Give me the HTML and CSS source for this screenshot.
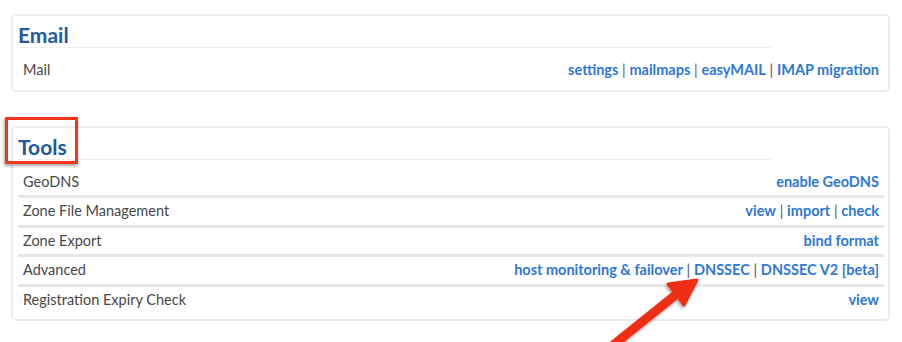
FILE: index.html
```html
<!DOCTYPE html>
<html>
<head>
<meta charset="utf-8">
<link rel="stylesheet" href="styles.css">
</head>
<body>
<div class="page">
  <section class="card">
    <h2 class="card-title">Email</h2>
    <div class="rows">
      <div class="row last">
        <span class="label">Mail</span>
        <span class="links"><a href="#">settings</a> <span class="sep">|</span> <a href="#">mailmaps</a> <span class="sep">|</span> <a href="#">easyMAIL</a> <span class="sep">|</span> <a href="#">IMAP migration</a></span>
      </div>
    </div>
  </section>

  <section class="card tools">
    <h2 class="card-title"><span class="highlight">Tools</span></h2>
    <div class="rows">
      <div class="row">
        <span class="label">GeoDNS</span>
        <span class="links"><a href="#">enable GeoDNS</a></span>
      </div>
      <div class="row">
        <span class="label">Zone File Management</span>
        <span class="links"><a href="#">view</a> <span class="sep">|</span> <a href="#">import</a> <span class="sep">|</span> <a href="#">check</a></span>
      </div>
      <div class="row">
        <span class="label">Zone Export</span>
        <span class="links"><a href="#">bind format</a></span>
      </div>
      <div class="row">
        <span class="label">Advanced</span>
        <span class="links"><a href="#">host monitoring &amp; failover</a> <span class="sep">|</span> <a href="#">DNSSEC</a> <span class="sep">|</span> <a href="#">DNSSEC V2 [beta]</a></span>
      </div>
      <div class="row last">
        <span class="label">Registration Expiry Check</span>
        <span class="links"><a href="#">view</a></span>
      </div>
    </div>
  </section>
</div>
<svg class="arrow" width="902" height="342" viewBox="0 0 902 342">
  <defs>
    <filter id="sh" x="-20%" y="-20%" width="140%" height="140%">
      <feDropShadow dx="-1" dy="2" stdDeviation="1.5" flood-color="#000" flood-opacity="0.35"/>
    </filter>
  </defs>
  <g filter="url(#sh)">
    <line x1="612" y1="346" x2="678" y2="293" stroke="#ef2f14" stroke-width="9" stroke-linecap="round"/>
    <polygon points="697,280 668,284 684,305" fill="#ef2f14" stroke="#ef2f14" stroke-width="3" stroke-linejoin="round"/>
  </g>
</svg>
</body>
</html>
```
FILE: styles.css
```css
html, body {
  margin: 0;
  padding: 0;
  background: #fff;
}
body {
  font-family: Lato, "Noto Sans", sans-serif;
  width: 902px;
  height: 342px;
  overflow: hidden;
  position: relative;
}
.page {
  padding: 14px 12px 0 11px;
}
.card {
  border: 2px solid #e8ecf2;
  border-radius: 5px;
  padding: 7px 4px 6px 5px;
  background: #fff;
}
.card.tools {
  margin-top: 34px;
  padding-bottom: 6px;
}
.card-title {
  margin: 0;
  width: 753px;
  font-size: 21px;
  line-height: 24px;
  font-weight: 700;
  color: #235b9c;
  border-bottom: 1px solid #eeeeee;
  position: relative;
}
.highlight {
  position: relative;
}
.highlight::after {
  content: "";
  position: absolute;
  left: -13px;
  top: -17px;
  width: 67px;
  height: 41px;
  border: 3px solid #f2361c;
  box-shadow: -1px 2px 3px rgba(0,0,0,0.35);
}
.rows {
  margin-top: 9px;
}
.row {
  display: flex;
  justify-content: space-between;
  align-items: baseline;
  padding: 3px 5px 3px 5px;
  font-size: 14.5px;
  line-height: 20.5px;
  border-bottom: 3px solid #e6e6e6;
}
.row.last {
  border-bottom: 0;
}
.label {
  color: #474747;
}
.links {
  color: #555;
}
.links a {
  color: #2e78d8;
  font-weight: 700;
  text-decoration: none;
}
.sep {
  color: #555;
}
.arrow {
  position: absolute;
  left: 0;
  top: 0;
  pointer-events: none;
}
```
